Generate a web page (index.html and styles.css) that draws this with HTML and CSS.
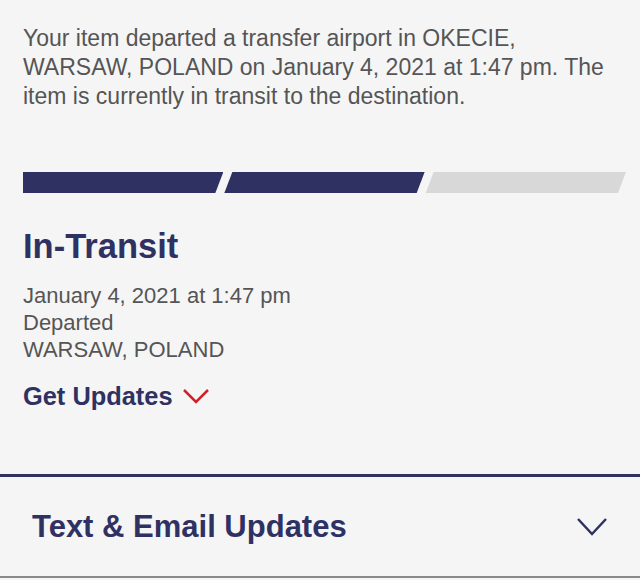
FILE: index.html
```html
<!DOCTYPE html>
<html>
<head>
<meta charset="utf-8">
<link rel="stylesheet" href="styles.css">
</head>
<body>
<div class="page">
  <section class="status">
    <p class="summary">Your item departed a transfer airport in OKECIE, WARSAW, POLAND on January 4, 2021 at 1:47 pm. The item is currently in transit to the destination.</p>
    <div class="progress">
      <span class="seg seg-first seg-done"></span>
      <span class="seg seg-done"></span>
      <span class="seg seg-todo"></span>
    </div>
    <h1 class="state">In-Transit</h1>
    <div class="details">
      <div>January 4, 2021 at 1:47 pm</div>
      <div>Departed</div>
      <div>WARSAW, POLAND</div>
    </div>
    <div class="get-updates">
      <span>Get Updates</span>
      <svg class="chev-red" width="28" height="16" viewBox="0 0 28 16"><path d="M2 2 L14 14 L26 2" fill="none" stroke="#d0202a" stroke-width="2.5"/></svg>
    </div>
  </section>
  <section class="accordion">
    <span class="acc-title">Text &amp; Email Updates</span>
    <svg class="chev-navy" width="32" height="20" viewBox="0 0 32 20"><path d="M2 2 L16 17 L30 2" fill="none" stroke="#2f3163" stroke-width="2.5"/></svg>
  </section>
</div>
</body>
</html>
```
FILE: styles.css
```css
html, body {
  margin: 0;
  padding: 0;
  background: #f5f5f5;
}
body {
  font-family: "Liberation Sans", Arial, sans-serif;
  width: 640px;
  height: 580px;
  overflow: hidden;
}
.page {
  display: flex;
  flex-direction: column;
}
.status {
  padding: 24px 14px 63px 23px;
  border-bottom: 3px solid #2f3163;
}
.summary {
  margin: 0;
  width: 592px;
  font-size: 23px;
  line-height: 29px;
  color: #555;
}
.progress {
  display: flex;
  margin-top: 61px;
  height: 21px;
  gap: 1px;
}
.seg {
  flex: 1;
  height: 21px;
  clip-path: polygon(8px 0, 100% 0, calc(100% - 8px) 100%, 0 100%);
}
.seg-first {
  clip-path: polygon(0 0, 100% 0, calc(100% - 8px) 100%, 0 100%);
}
.seg-done { background: #2f3163; }
.seg-todo { background: #d8d8d8; }
.state {
  margin: 33px 0 0 0;
  font-size: 34.5px;
  line-height: 40px;
  color: #2f3163;
  font-weight: bold;
}
.details {
  margin-top: 16px;
  font-size: 22px;
  line-height: 27px;
  color: #555;
}
.get-updates {
  margin-top: 18px;
  height: 30px;
  display: flex;
  align-items: center;
  gap: 9px;
  font-size: 25.4px;
  font-weight: bold;
  color: #2f3163;
}
.accordion {
  display: flex;
  align-items: center;
  justify-content: space-between;
  padding: 0 32px 0 32px;
  height: 99px;
  border-bottom: 2px solid #8a8a8a;
}
.acc-title {
  font-size: 31px;
  font-weight: bold;
  color: #2f3163;
}
```
